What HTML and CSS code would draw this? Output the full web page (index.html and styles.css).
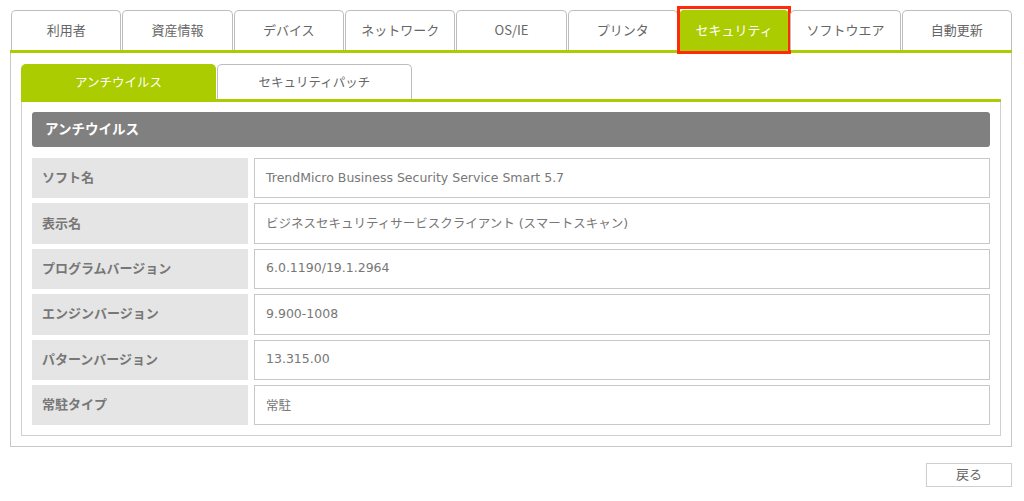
FILE: index.html
```html
<!DOCTYPE html>
<html lang="ja">
<head>
<meta charset="utf-8">
<title>セキュリティ</title>
<link rel="stylesheet" href="styles.css">
</head>
<body>
<div class="page">
  <nav class="tabs">
    <div class="tab">利用者</div>
    <div class="tab">資産情報</div>
    <div class="tab">デバイス</div>
    <div class="tab">ネットワーク</div>
    <div class="tab">OS/IE</div>
    <div class="tab">プリンタ</div>
    <div class="tab active">セキュリティ</div>
    <div class="tab">ソフトウエア</div>
    <div class="tab">自動更新</div>
  </nav>
  <div class="panel">
    <div class="subtabs">
      <div class="subtab active">アンチウイルス</div>
      <div class="subtab">セキュリティパッチ</div>
    </div>
    <div class="subpanel">
      <div class="section-head">アンチウイルス</div>
      <div class="rows">
        <div class="row"><div class="label">ソフト名</div><div class="value">TrendMicro Business Security Service Smart 5.7</div></div>
        <div class="row"><div class="label">表示名</div><div class="value">ビジネスセキュリティサービスクライアント (スマートスキャン)</div></div>
        <div class="row"><div class="label">プログラムバージョン</div><div class="value">6.0.1190/19.1.2964</div></div>
        <div class="row"><div class="label">エンジンバージョン</div><div class="value">9.900-1008</div></div>
        <div class="row"><div class="label">パターンバージョン</div><div class="value">13.315.00</div></div>
        <div class="row"><div class="label">常駐タイプ</div><div class="value">常駐</div></div>
      </div>
    </div>
  </div>
  <div class="actions">
    <button class="back">戻る</button>
  </div>
</div>
</body>
</html>
```

FILE: styles.css
```css
* { box-sizing: border-box; }
html, body { margin: 0; padding: 0; background: #fff; }
body {
  font-family: "DejaVu Sans", "Noto Sans CJK JP", sans-serif;
  font-size: 13px;
  color: #666;
}
.page {
  width: 1002px;
  margin-left: 10px;
  padding-top: 10px;
}
.tabs {
  display: flex;
  gap: 1px;
  padding-left: 1px;
  border-bottom: 3px solid #aacc00;
}
.tab {
  position: relative;
  flex: 1;
  height: 40px;
  padding-bottom: 3px;
  border: 1px solid #bdbdbd;
  border-bottom: none;
  border-radius: 5px 5px 0 0;
  display: flex;
  align-items: center;
  justify-content: center;
  color: #666;
  background: #fff;
  font-family: "Noto Sans CJK JP", sans-serif;
  font-size: 13px;
}
.tab.active {
  background: #aacc00;
  color: #fff;
  border-color: #aacc00;
}
.tab.active::after {
  content: "";
  position: absolute;
  left: -3px;
  right: -3px;
  top: -5px;
  bottom: -4px;
  border: 3px solid #ff2a0a;
}
.panel {
  border: 1px solid #c8c8c8;
  border-top: none;
  padding: 11px 10px 10px 10px;
}
.subtabs {
  display: flex;
  gap: 1px;
  border-bottom: 3px solid #aacc00;
}
.subtab {
  width: 195px;
  height: 35px;
  padding-bottom: 2px;
  border: 1px solid #bdbdbd;
  border-bottom: none;
  border-radius: 5px 5px 0 0;
  display: flex;
  align-items: center;
  justify-content: center;
  color: #666;
  background: #fff;
  font-family: "Noto Sans CJK JP", sans-serif;
  font-size: 12.5px;
}
.subtab.active {
  background: #aacc00;
  border-color: #aacc00;
  color: #fff;
}
.subpanel {
  border: 1px solid #d0d0d0;
  border-top: none;
  padding: 10px 10px 10px 10px;
}
.section-head {
  height: 35px;
  padding-bottom: 3px;
  background: #808080;
  border-radius: 3px;
  color: #fff;
  font-weight: bold;
  font-family: "Noto Sans CJK JP", sans-serif;
  font-size: 13.5px;
  display: flex;
  align-items: center;
  padding-left: 13px;
  margin-bottom: 11px;
}
.rows {
  display: flex;
  flex-direction: column;
  gap: 5px;
}
.row {
  display: flex;
  gap: 6px;
  height: 40.4px;
}
.label {
  width: 216px;
  background: #e5e5e5;
  display: flex;
  align-items: center;
  padding-left: 10px;
  padding-bottom: 3px;
  font-weight: bold;
  color: #777;
  font-family: "Noto Sans CJK JP", sans-serif;
  font-size: 13px;
}
.value {
  flex: 1;
  border: 1px solid #c8c8c8;
  background: #fff;
  display: flex;
  align-items: center;
  padding-left: 11px;
  padding-bottom: 2px;
  color: #777;
  font-size: 12.5px;
}
.actions {
  display: flex;
  justify-content: flex-end;
  padding-top: 16px;
}
.back {
  width: 86px;
  height: 24px;
  padding: 0 0 3px 0;
  border: 1px solid #cfcfcf;
  background: #fff;
  color: #666;
  font-family: "Noto Sans CJK JP", sans-serif;
  font-size: 13px;
  box-shadow: 0 1px 1px rgba(0,0,0,0.08);
  cursor: pointer;
}
```
